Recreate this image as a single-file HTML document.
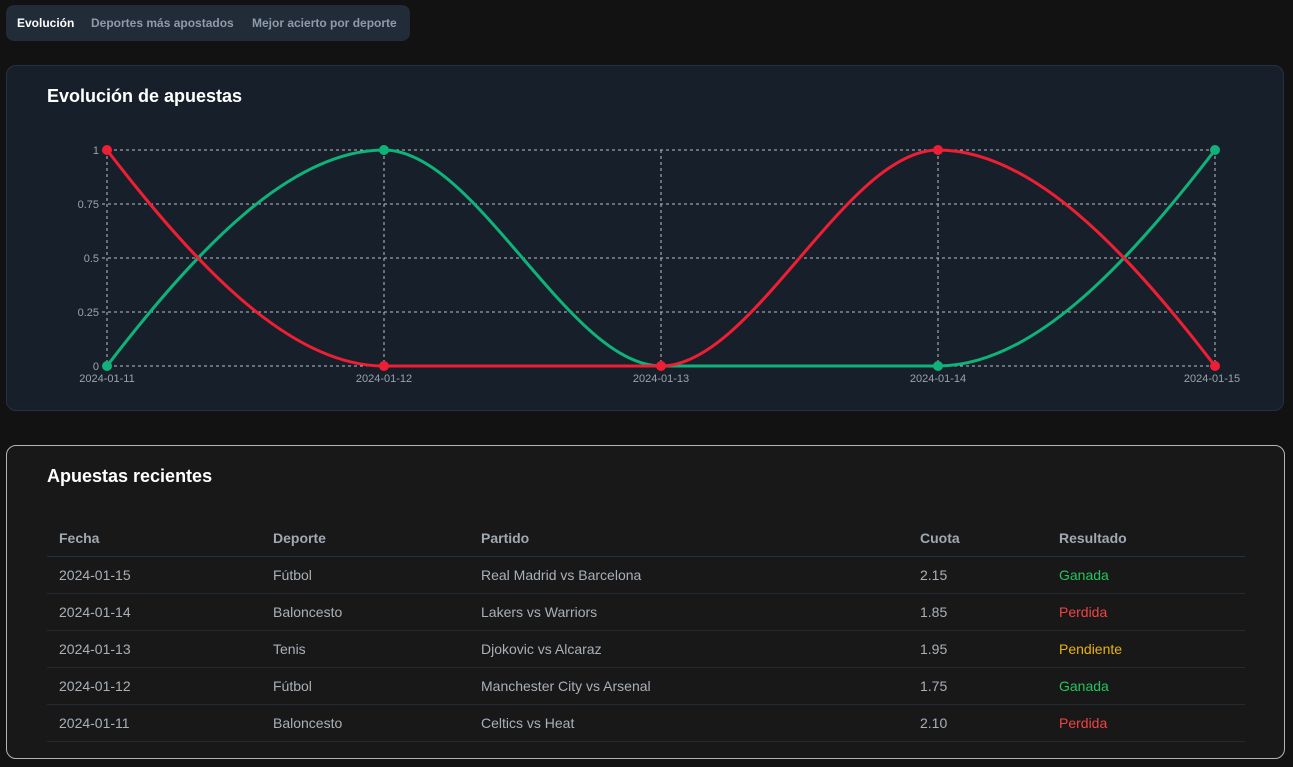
<!DOCTYPE html><html><head><meta charset="utf-8"><style>
body{margin:0;background:#121212;width:1293px;height:767px;overflow:hidden;font-family:"Liberation Sans",sans-serif;position:relative}
.tabs{position:absolute;left:6px;top:5px;width:404px;height:36px;background:#212c38;border-radius:8px;font-size:12px;font-weight:bold}
.tabs span{position:absolute;top:11px;color:#8e9bab}
.c1{position:absolute;left:6px;top:65px;width:1278px;height:346px;background:#17202a;border:1px solid #243140;border-radius:10px;box-sizing:border-box}
.c2{position:absolute;left:6px;top:445px;width:1279px;height:314px;background:#181818;border:1px solid #b5b5b5;border-radius:10px;box-sizing:border-box}
h2{position:absolute;margin:0;font-size:18px;color:#fff;font-weight:bold}
.t{position:absolute;font-size:14px;color:#a9b0b8}
.th{font-weight:bold;color:#a0a8b2}
.ln{position:absolute;left:47px;width:1198px;height:1px;background:#222b33}
</style></head><body>
<div class="tabs"><span style="left:11px;color:#fff">Evolución</span><span style="left:85px">Deportes más apostados</span><span style="left:246px">Mejor acierto por deporte</span></div>
<div class="c1"></div>
<h2 style="left:47px;top:86px">Evolución de apuestas</h2>
<svg style="position:absolute;left:0;top:0" width="1293" height="420" font-family="Liberation Sans" font-size="11" fill="#9aa3ad">
<g stroke="#b9bec4" stroke-dasharray="3,3" stroke-width="1">
<line x1="102" y1="150" x2="1215" y2="150"/><line x1="102" y1="204" x2="1215" y2="204"/><line x1="102" y1="258" x2="1215" y2="258"/><line x1="102" y1="312" x2="1215" y2="312"/><line x1="102" y1="366" x2="1215" y2="366"/>
<line x1="107" y1="150" x2="107" y2="370"/><line x1="384" y1="150" x2="384" y2="370"/><line x1="661" y1="150" x2="661" y2="370"/><line x1="938" y1="150" x2="938" y2="370"/><line x1="1215" y1="150" x2="1215" y2="370"/>
</g>
<g text-anchor="end"><text x="99" y="154">1</text><text x="99" y="208">0.75</text><text x="99" y="262">0.5</text><text x="99" y="316">0.25</text><text x="99" y="370">0</text></g>
<g text-anchor="middle"><text x="107" y="382">2024-01-11</text><text x="384" y="382">2024-01-12</text><text x="661" y="382">2024-01-13</text><text x="938" y="382">2024-01-14</text><text x="1212" y="382">2024-01-15</text></g>
<path d="M107,366 C199,246 292,150 384,150 C476,150 569,366 661,366 L938,366 C1030,366 1123,270 1215,150" fill="none" stroke="#10b27a" stroke-width="3"/>
<path d="M107,150 C199,270 292,366 384,366 L661,366 C753,366 846,150 938,150 C1030,150 1123,246 1215,366" fill="none" stroke="#ee1f34" stroke-width="3"/>
<g fill="#10b27a"><circle cx="107" cy="366" r="5"/><circle cx="384" cy="150" r="5"/><circle cx="938" cy="366" r="5"/><circle cx="1215" cy="150" r="5"/></g>
<g fill="#ee1f34"><circle cx="107" cy="150" r="5"/><circle cx="384" cy="366" r="5"/><circle cx="661" cy="366" r="5"/><circle cx="938" cy="150" r="5"/><circle cx="1215" cy="366" r="5"/></g>
</svg>
<div class="c2"></div>
<h2 style="left:47px;top:466px">Apuestas recientes</h2>
<div class="t th" style="left:59px;top:530px">Fecha</div><div class="t th" style="left:273px;top:530px">Deporte</div><div class="t th" style="left:481px;top:530px">Partido</div><div class="t th" style="left:920px;top:530px">Cuota</div><div class="t th" style="left:1059px;top:530px">Resultado</div>
<div class="ln" style="top:556px;background:#1f3345"></div>
<div class="t" style="left:59px;top:567px">2024-01-15</div><div class="t" style="left:273px;top:567px">Fútbol</div><div class="t" style="left:481px;top:567px">Real Madrid vs Barcelona</div><div class="t" style="left:920px;top:567px">2.15</div><div class="t" style="left:1059px;top:567px;color:#22c55e">Ganada</div>
<div class="ln" style="top:593px"></div>
<div class="t" style="left:59px;top:604px">2024-01-14</div><div class="t" style="left:273px;top:604px">Baloncesto</div><div class="t" style="left:481px;top:604px">Lakers vs Warriors</div><div class="t" style="left:920px;top:604px">1.85</div><div class="t" style="left:1059px;top:604px;color:#ef4444">Perdida</div>
<div class="ln" style="top:630px"></div>
<div class="t" style="left:59px;top:641px">2024-01-13</div><div class="t" style="left:273px;top:641px">Tenis</div><div class="t" style="left:481px;top:641px">Djokovic vs Alcaraz</div><div class="t" style="left:920px;top:641px">1.95</div><div class="t" style="left:1059px;top:641px;color:#eab308">Pendiente</div>
<div class="ln" style="top:667px"></div>
<div class="t" style="left:59px;top:678px">2024-01-12</div><div class="t" style="left:273px;top:678px">Fútbol</div><div class="t" style="left:481px;top:678px">Manchester City vs Arsenal</div><div class="t" style="left:920px;top:678px">1.75</div><div class="t" style="left:1059px;top:678px;color:#22c55e">Ganada</div>
<div class="ln" style="top:704px"></div>
<div class="t" style="left:59px;top:715px">2024-01-11</div><div class="t" style="left:273px;top:715px">Baloncesto</div><div class="t" style="left:481px;top:715px">Celtics vs Heat</div><div class="t" style="left:920px;top:715px">2.10</div><div class="t" style="left:1059px;top:715px;color:#ef4444">Perdida</div>
<div class="ln" style="top:741px"></div>
</body></html>
